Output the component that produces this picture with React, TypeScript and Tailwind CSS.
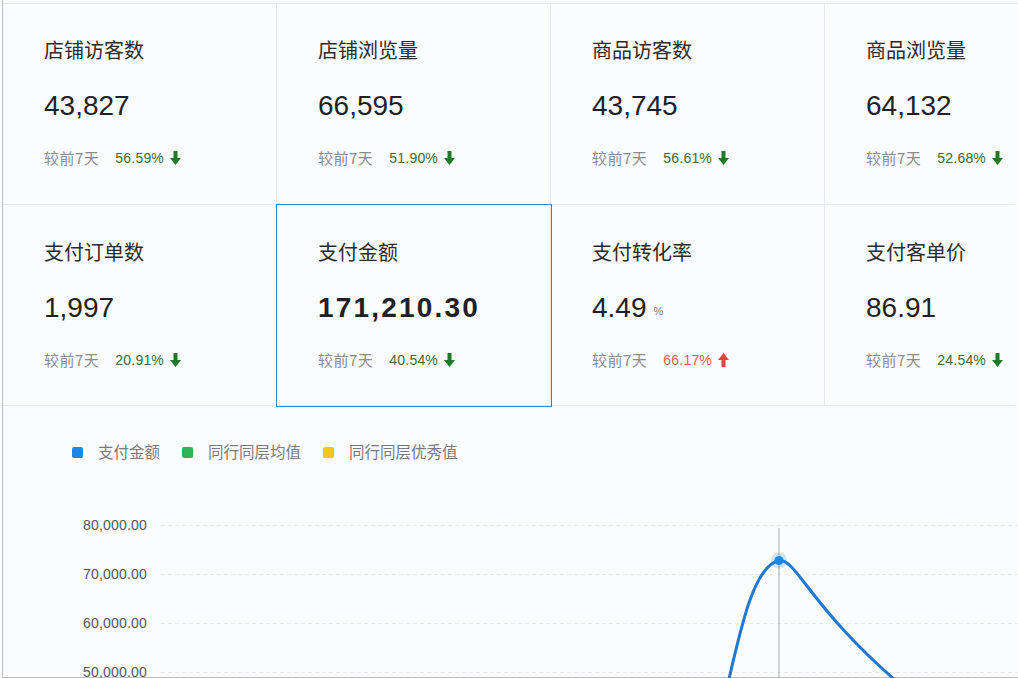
import React from "react";

type Stat = {
  title: string;
  value: string;
  unit?: string;
  pct: string;
  up?: boolean;
  active?: boolean;
};

const row1: Stat[] = [
  { title: "店铺访客数", value: "43,827", pct: "56.59%" },
  { title: "店铺浏览量", value: "66,595", pct: "51.90%" },
  { title: "商品访客数", value: "43,745", pct: "56.61%" },
  { title: "商品浏览量", value: "64,132", pct: "52.68%" },
];

const row2: Stat[] = [
  { title: "支付订单数", value: "1,997", pct: "20.91%" },
  { title: "支付金额", value: "171,210.30", pct: "40.54%", active: true },
  { title: "支付转化率", value: "4.49", unit: "%", pct: "66.17%", up: true },
  { title: "支付客单价", value: "86.91", pct: "24.54%" },
];

const cjk = { fontFamily: '"Noto Sans CJK SC", "Noto Sans", sans-serif' };
const num = { fontFamily: '"Liberation Sans", Arial, sans-serif' };

const Arrow = ({ up }: { up?: boolean }) => (
  <svg width="11" height="14" viewBox="0 0 11 14" className="ml-[6px]">
    {up ? (
      <path d="M5.5 0 L11 7 H7.5 V14 H3.5 V7 H0 Z" fill="#e8403f" />
    ) : (
      <path d="M3.5 0 H7.5 V7 H11 L5.5 14 L0 7 H3.5 Z" fill="#1f7a25" />
    )}
  </svg>
);

const Card = ({ s, last, top }: { s: Stat; last?: boolean; top?: boolean }) => (
  <div
    className={`relative flex h-[201px] flex-col border-b border-[#e6eaf0] pl-[41px] ${
      top ? "pt-[34px]" : "pt-[35px]"
    } ${last ? "w-[190px]" : "w-[274px] border-r"} ${
      s.active ? "z-10 outline outline-[#3a86c9]" : ""
    }`}
  >
    <div className="h-[24px] text-[20px] leading-[24px] text-[#2b2b2b]" style={cjk}>
      {s.title}
    </div>
    <div className="mt-[27px] flex h-[34px] items-center text-[#1f1f28]" style={num}>
      <span
        className={
          s.active
            ? "text-[28px] font-bold tracking-[2.2px]"
            : "text-[28px]"
        }
      >
        {s.value}
      </span>
      {s.unit && <span className="ml-[7px] mt-[6px] text-[11px] text-[#777]">{s.unit}</span>}
    </div>
    <div className="mt-[25px] flex h-[20px] items-center">
      <span className="text-[15px] tracking-[0.5px] text-[#8a8a93]" style={cjk}>
        较前7天
      </span>
      <span
        className={`ml-[16px] text-[14px] tracking-[0.2px] ${s.up ? "text-[#e8605c]" : "text-[#3d6b3d]"}`}
        style={num}
      >
        {s.pct}
      </span>
      <Arrow up={s.up} />
    </div>
  </div>
);

const Legend = ({ color, label }: { color: string; label: string }) => (
  <div className="flex items-center">
    <span className="h-[11px] w-[11px] rounded-[2px]" style={{ background: color }} />
    <span className="ml-[15px] text-[15.5px] text-[#7a7a82]" style={cjk}>
      {label}
    </span>
  </div>
);

const yLabels = ["80,000.00", "70,000.00", "60,000.00", "50,000.00"];

export default function App() {
  return (
    <div className="h-[678px] w-[1018px] overflow-hidden bg-[#fbfcfe] pl-[2px]">
      <div className="flex h-full flex-col border-b border-l border-[#b9bec6]">
        <div className="mt-[3px] border-t border-[#e6eaf0]">
          <div className="flex">
            {row1.map((s, i) => (
              <Card key={s.title} s={s} last={i === 3} top />
            ))}
          </div>
          <div className="flex">
            {row2.map((s, i) => (
              <Card key={s.title} s={s} last={i === 3} />
            ))}
          </div>
        </div>

        <div className="flex flex-1 flex-col pt-[36px]">
          <div className="ml-[69px] flex h-[20px] items-center gap-[22px]">
            <Legend color="#1e88e5" label="支付金额" />
            <Legend color="#2fb35a" label="同行同层均值" />
            <Legend color="#f5c518" label="同行同层优秀值" />
          </div>

          <div className="mt-[39px] flex">
            <div className="flex w-[145px] flex-col items-end">
              {yLabels.map((l) => (
                <div
                  key={l}
                  className="flex h-[49px] items-center text-[14px] tracking-[0.2px] text-[#555560]"
                  style={num}
                >
                  {l}
                </div>
              ))}
            </div>
            <svg width="863" height="196" viewBox="0 0 863 196" className="ml-[8px] shrink-0">
              {[24.5, 73.5, 122.5, 171.5].map((y) => (
                <line
                  key={y}
                  x1="6"
                  x2="863"
                  y1={y}
                  y2={y}
                  stroke="#e8ecf1"
                  strokeDasharray="4 3"
                />
              ))}
              <line x1="624" x2="624" y1="27" y2="196" stroke="#a4a8ae" strokeWidth="1" />
              <path
                d="M569 200 C585 130, 598 65, 624 59.5 C642 57, 655 110, 760 196"
                fill="none"
                stroke="#1f78d1"
                strokeWidth="3"
                strokeLinecap="round"
              />
              <circle cx="624" cy="59.5" r="8" fill="#1e88e5" opacity="0.2" />
              <circle cx="624" cy="59.5" r="4.5" fill="#1e88e5" />
            </svg>
          </div>
        </div>
      </div>
    </div>
  );
}
